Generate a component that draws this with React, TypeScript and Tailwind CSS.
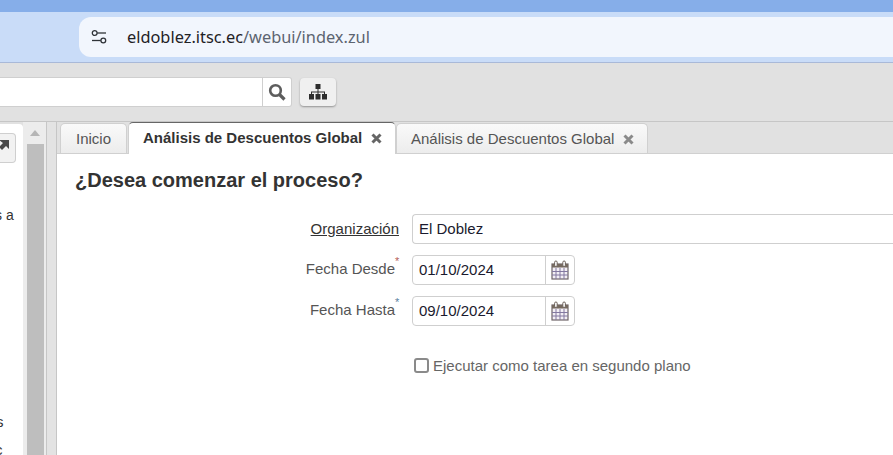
import React from "react";

const Cal = () => (
  <svg width="18" height="20" viewBox="0 0 18 20" className="block">
    <rect x="1" y="4" width="16" height="15" fill="#f3eff5" stroke="#6f6468" strokeWidth="1.2" />
    <rect x="1" y="4" width="16" height="3.5" fill="#75695f" />
    <path d="M1 11.5h16M1 15h16M5 8v11M9 8v11M13 8v11" stroke="#8379a0" strokeWidth="1" fill="none" />
    <rect x="3.6" y="1" width="2.6" height="5.5" rx="1.3" fill="#fff" stroke="#6b5f58" />
    <rect x="11.8" y="1" width="2.6" height="5.5" rx="1.3" fill="#fff" stroke="#6b5f58" />
  </svg>
);

const Close = ({ color }: { color: string }) => (
  <svg width="11" height="11" viewBox="0 0 11 11" className="block">
    <path d="M1.5 1.5l8 8M9.5 1.5l-8 8" stroke={color} strokeWidth="3" />
  </svg>
);

const DateField = ({ value }: { value: string }) => (
  <div className="flex h-[30px] w-[163px] rounded-[4px] border border-[#cfcfcf] bg-white">
    <div className="flex-1 pl-[6px] text-[15px] leading-[28px] text-[#1a1a2e]">{value}</div>
    <div className="flex w-[29px] items-center justify-center border-l border-[#cfcfcf]"><Cal /></div>
  </div>
);

export default function App() {
  return (
    <div className="flex h-[455px] w-[893px] flex-col overflow-hidden bg-white font-['Liberation_Sans',sans-serif]">
      <div className="h-3 bg-[#86aee9]" />
      <div className="h-[51px] border-b border-[#a9b9d8] bg-[#c9dcf8] pl-[79px] pt-[5px]">
        <div className="flex h-10 items-center rounded-l-[12px] bg-[#f2f6fd] pl-[12px]">
          <svg width="16" height="16" viewBox="0 0 16 16" fill="none" stroke="#2f3338" strokeWidth="1.3" className="block">
            <circle cx="3.7" cy="4" r="2.4" />
            <path d="M6.2 4H15" />
            <circle cx="12.3" cy="11.5" r="2.4" />
            <path d="M1 11.5h8.8" />
          </svg>
          <span className="ml-[20px] font-['Noto_Sans',sans-serif] text-[16.35px] text-[#1f2125]">
            eldoblez.itsc.ec<span className="text-[#5c6470]">/webui/index.zul</span>
          </span>
        </div>
      </div>
      <div className="flex h-[58px] items-start bg-[#e1e1e1] pt-[14px]">
        <div className="flex h-[30px] w-[292px] rounded-r-[3px] border-y border-r border-[#cfcfcf] bg-white">
          <div className="flex-1 border-r border-[#cfcfcf]" />
          <div className="flex w-[28px] items-center justify-center">
            <svg width="18" height="18" viewBox="0 0 18 18" fill="none" stroke="#5d5d5d" className="block">
              <circle cx="7.5" cy="7.5" r="5.3" strokeWidth="2.6" />
              <path d="M11.5 11.5l5 5" strokeWidth="3.2" />
            </svg>
          </div>
        </div>
        <div className="ml-[8px] mt-px flex h-[28px] w-[36px] items-center justify-center rounded-[4px] bg-[#f0f0f0] shadow-[0_1px_2px_rgba(0,0,0,0.35)]">
          <svg width="18" height="16" viewBox="0 0 18 16" className="block" fill="#2d2d2d">
            <rect x="6.5" y="0" width="5" height="5" />
            <rect x="0" y="10" width="5" height="5.5" />
            <rect x="6.5" y="10" width="5" height="5.5" />
            <rect x="13" y="10" width="5" height="5.5" />
            <path d="M8.5 5h1v2.5h6.5V10h-1V8.5h-5.5V10h-1V8.5H3V10H2V7.5h6.5z" />
          </svg>
        </div>
      </div>
      <div className="flex min-h-0 flex-1 border-t border-[#c6c6c6] bg-[#e1e1e1]">
        <div className="mt-[2px] w-[23px] overflow-hidden rounded-tr-[4px] bg-white">
          <div className="mt-[9px] h-[30px] w-[16px] rounded-r-[4px] border border-l-0 border-[#cfcfcf] bg-[#f2f2f2] pt-[5px]">
            <svg width="12" height="12" viewBox="0 0 12 12" className="ml-[-1px] block">
              <path d="M0 1h10v9L7 7 3 11 0 8l4-4z" fill="#4a4a4a" />
            </svg>
          </div>
          <div className="ml-[-5px] mt-[44px] whitespace-nowrap text-[14px] leading-4 text-[#333]">s a</div>
          <div className="ml-[-4px] mt-[191px] text-[15px] leading-4 text-[#333]">s</div>
          <div className="ml-[-5px] mt-[12px] text-[15px] leading-4 text-[#333]">c</div>
        </div>
        <div className="flex w-[23px] flex-col bg-[#ececec]">
          <div className="flex h-[22px] items-center justify-center">
            <div className="h-0 w-0 border-x-[5px] border-b-[6px] border-x-transparent border-b-[#b5b5b5]" />
          </div>
          <div className="ml-[4px] w-[17px] flex-1 bg-[#bebebe]" />
        </div>
        <div className="w-[11px] border-x border-[#c6c6c6] bg-[#e3e3e3]" />
        <div className="flex min-w-0 flex-1 flex-col">
          <div className="flex h-[32px] items-end border-b border-[#d0d0d0] bg-[#e1e1e1] pl-[3px]">
            <div className="flex h-[30px] w-[67px] items-center justify-center rounded-t-[5px] border border-b-0 border-[#d0d0d0] bg-gradient-to-b from-[#fafafa] to-[#ececec] pt-px text-[15px] text-[#555]">
              Inicio
            </div>
            <div className="relative top-px ml-px flex h-[32px] w-[268px] items-center rounded-t-[5px] border-x border-t border-x-[#d0d0d0] border-t-[#666] bg-white pl-[14px] text-[15px] font-bold text-[#333]">
              <span>Análisis de Descuentos Global</span>
              <span className="ml-[9px]"><Close color="#666" /></span>
            </div>
            <div className="flex h-[30px] w-[252px] items-center rounded-t-[5px] border border-b-0 border-[#d0d0d0] bg-gradient-to-b from-[#fafafa] to-[#ececec] pl-[14px] pt-px text-[15px] text-[#555]">
              <span>Análisis de Descuentos Global</span>
              <span className="ml-[9px]"><Close color="#8a8a8a" /></span>
            </div>
          </div>
          <div className="flex-1 bg-white">
            <div className="pl-[18px] pt-[15px] text-[20px] font-bold leading-[22px] text-[#333]">
              ¿Desea comenzar el proceso?
            </div>
            <div className="mt-[23px] grid grid-cols-[342px_1fr] items-center gap-x-[13px] gap-y-[11px]">
              <div className="pb-[2px] text-right text-[15px] leading-[17px] text-[#333] underline">Organización</div>
              <div className="h-[30px] rounded-l-[4px] border-y border-l border-[#cfcfcf] pl-[6px] text-[15px] leading-[28px] text-[#1a1a2e]">El Doblez</div>
              <div className="flex justify-end pb-[3px] text-[15px] leading-[17px] text-[#555]">
                <span>Fecha Desde</span>
                <span className="relative -top-[4px] w-[4px] text-[11px] leading-[10px] text-[#b5615a]">*</span>
              </div>
              <DateField value="01/10/2024" />
              <div className="flex justify-end pb-[3px] text-[15px] leading-[17px] text-[#555]">
                <span>Fecha Hasta</span>
                <span className="relative -top-[4px] w-[4px] text-[11px] leading-[10px] text-[#5a7fa0]">*</span>
              </div>
              <DateField value="09/10/2024" />
            </div>
            <div className="ml-[357px] mt-[31px] flex items-center">
              <div className="h-[15px] w-[15px] rounded-[3px] border-2 border-[#8a8a8a] bg-white" />
              <span className="ml-[4px] text-[15px] leading-[17px] text-[#666]">Ejecutar como tarea en segundo plano</span>
            </div>
          </div>
        </div>
      </div>
    </div>
  );
}
